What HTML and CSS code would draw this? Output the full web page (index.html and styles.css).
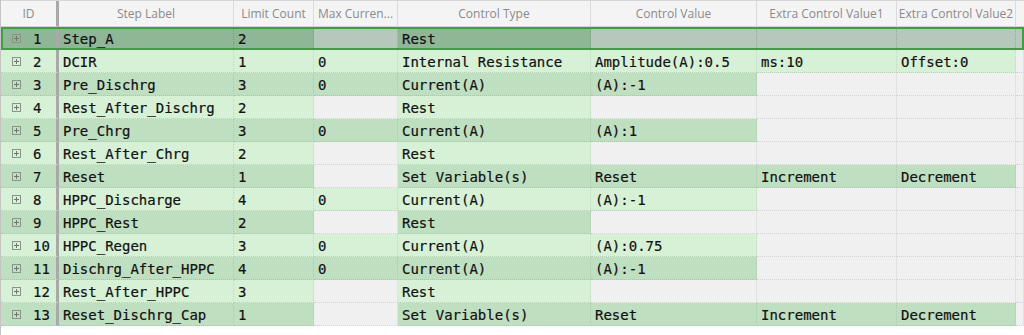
FILE: index.html
```html
<!DOCTYPE html>
<html>
<head>
<meta charset="utf-8">
<link rel="stylesheet" href="styles.css">
</head>
<body>
<div class="grid">
  <div class="row head">
    <div class="hc idcol">ID</div>
    <div class="hc">Step Label</div>
    <div class="hc">Limit Count</div>
    <div class="hc">Max Curren...</div>
    <div class="hc">Control Type</div>
    <div class="hc">Control Value</div>
    <div class="hc">Extra Control Value1</div>
    <div class="hc">Extra Control Value2</div>
    <div class="hc fill"></div>
  </div>

  <div class="row sel">
    <div class="c idcol"><svg class="exp" viewBox="0 0 9 9"><rect x="0.5" y="0.5" width="8" height="8"/><path d="M2 4.5h5M4.5 2v5"/></svg><span>1</span></div>
    <div class="c">Step_A</div>
    <div class="c">2</div>
    <div class="c e"></div>
    <div class="c">Rest</div>
    <div class="c e"></div>
    <div class="c e"></div>
    <div class="c e"></div>
    <div class="c e fill"></div>
  </div>

  <div class="row lt">
    <div class="c idcol"><svg class="exp" viewBox="0 0 9 9"><rect x="0.5" y="0.5" width="8" height="8"/><path d="M2 4.5h5M4.5 2v5"/></svg><span>2</span></div>
    <div class="c">DCIR</div>
    <div class="c">1</div>
    <div class="c">0</div>
    <div class="c">Internal Resistance</div>
    <div class="c">Amplitude(A):0.5</div>
    <div class="c">ms:10</div>
    <div class="c">Offset:0</div>
    <div class="c e fill"></div>
  </div>

  <div class="row dk">
    <div class="c idcol"><svg class="exp" viewBox="0 0 9 9"><rect x="0.5" y="0.5" width="8" height="8"/><path d="M2 4.5h5M4.5 2v5"/></svg><span>3</span></div>
    <div class="c">Pre_Dischrg</div>
    <div class="c">3</div>
    <div class="c">0</div>
    <div class="c">Current(A)</div>
    <div class="c">(A):-1</div>
    <div class="c e"></div>
    <div class="c e"></div>
    <div class="c e fill"></div>
  </div>

  <div class="row lt">
    <div class="c idcol"><svg class="exp" viewBox="0 0 9 9"><rect x="0.5" y="0.5" width="8" height="8"/><path d="M2 4.5h5M4.5 2v5"/></svg><span>4</span></div>
    <div class="c">Rest_After_Dischrg</div>
    <div class="c">2</div>
    <div class="c e"></div>
    <div class="c">Rest</div>
    <div class="c e"></div>
    <div class="c e"></div>
    <div class="c e"></div>
    <div class="c e fill"></div>
  </div>

  <div class="row dk">
    <div class="c idcol"><svg class="exp" viewBox="0 0 9 9"><rect x="0.5" y="0.5" width="8" height="8"/><path d="M2 4.5h5M4.5 2v5"/></svg><span>5</span></div>
    <div class="c">Pre_Chrg</div>
    <div class="c">3</div>
    <div class="c">0</div>
    <div class="c">Current(A)</div>
    <div class="c">(A):1</div>
    <div class="c e"></div>
    <div class="c e"></div>
    <div class="c e fill"></div>
  </div>

  <div class="row lt">
    <div class="c idcol"><svg class="exp" viewBox="0 0 9 9"><rect x="0.5" y="0.5" width="8" height="8"/><path d="M2 4.5h5M4.5 2v5"/></svg><span>6</span></div>
    <div class="c">Rest_After_Chrg</div>
    <div class="c">2</div>
    <div class="c e"></div>
    <div class="c">Rest</div>
    <div class="c e"></div>
    <div class="c e"></div>
    <div class="c e"></div>
    <div class="c e fill"></div>
  </div>

  <div class="row dk">
    <div class="c idcol"><svg class="exp" viewBox="0 0 9 9"><rect x="0.5" y="0.5" width="8" height="8"/><path d="M2 4.5h5M4.5 2v5"/></svg><span>7</span></div>
    <div class="c">Reset</div>
    <div class="c">1</div>
    <div class="c e"></div>
    <div class="c">Set Variable(s)</div>
    <div class="c">Reset</div>
    <div class="c">Increment</div>
    <div class="c">Decrement</div>
    <div class="c e fill"></div>
  </div>

  <div class="row lt">
    <div class="c idcol"><svg class="exp" viewBox="0 0 9 9"><rect x="0.5" y="0.5" width="8" height="8"/><path d="M2 4.5h5M4.5 2v5"/></svg><span>8</span></div>
    <div class="c">HPPC_Discharge</div>
    <div class="c">4</div>
    <div class="c">0</div>
    <div class="c">Current(A)</div>
    <div class="c">(A):-1</div>
    <div class="c e"></div>
    <div class="c e"></div>
    <div class="c e fill"></div>
  </div>

  <div class="row dk">
    <div class="c idcol"><svg class="exp" viewBox="0 0 9 9"><rect x="0.5" y="0.5" width="8" height="8"/><path d="M2 4.5h5M4.5 2v5"/></svg><span>9</span></div>
    <div class="c">HPPC_Rest</div>
    <div class="c">2</div>
    <div class="c e"></div>
    <div class="c">Rest</div>
    <div class="c e"></div>
    <div class="c e"></div>
    <div class="c e"></div>
    <div class="c e fill"></div>
  </div>

  <div class="row lt">
    <div class="c idcol"><svg class="exp" viewBox="0 0 9 9"><rect x="0.5" y="0.5" width="8" height="8"/><path d="M2 4.5h5M4.5 2v5"/></svg><span>10</span></div>
    <div class="c">HPPC_Regen</div>
    <div class="c">3</div>
    <div class="c">0</div>
    <div class="c">Current(A)</div>
    <div class="c">(A):0.75</div>
    <div class="c e"></div>
    <div class="c e"></div>
    <div class="c e fill"></div>
  </div>

  <div class="row dk">
    <div class="c idcol"><svg class="exp" viewBox="0 0 9 9"><rect x="0.5" y="0.5" width="8" height="8"/><path d="M2 4.5h5M4.5 2v5"/></svg><span>11</span></div>
    <div class="c">Dischrg_After_HPPC</div>
    <div class="c">4</div>
    <div class="c">0</div>
    <div class="c">Current(A)</div>
    <div class="c">(A):-1</div>
    <div class="c e"></div>
    <div class="c e"></div>
    <div class="c e fill"></div>
  </div>

  <div class="row lt">
    <div class="c idcol"><svg class="exp" viewBox="0 0 9 9"><rect x="0.5" y="0.5" width="8" height="8"/><path d="M2 4.5h5M4.5 2v5"/></svg><span>12</span></div>
    <div class="c">Rest_After_HPPC</div>
    <div class="c">3</div>
    <div class="c e"></div>
    <div class="c">Rest</div>
    <div class="c e"></div>
    <div class="c e"></div>
    <div class="c e"></div>
    <div class="c e fill"></div>
  </div>

  <div class="row dk">
    <div class="c idcol"><svg class="exp" viewBox="0 0 9 9"><rect x="0.5" y="0.5" width="8" height="8"/><path d="M2 4.5h5M4.5 2v5"/></svg><span>13</span></div>
    <div class="c">Reset_Dischrg_Cap</div>
    <div class="c">1</div>
    <div class="c e"></div>
    <div class="c">Set Variable(s)</div>
    <div class="c">Reset</div>
    <div class="c">Increment</div>
    <div class="c">Decrement</div>
    <div class="c e fill"></div>
  </div>
</div>
</body>
</html>
```

FILE: styles.css
```css
html, body {
  margin: 0;
  padding: 0;
  background: #ffffff;
}

.grid {
  width: 1024px;
  height: 335px;
  box-sizing: border-box;
  border-left: 1px solid #c4c4c4;
  background: #ffffff;
}

.row {
  display: grid;
  grid-template-columns: 58px 175px 80px 84px 193px 166px 140px 119px 8px;
  height: 23px;
  position: relative;
}

.head {
  height: 27px;
  background: #f4f4f4;
  border-top: 1px solid #d6d6d6;
  box-sizing: border-box;
}

.hc {
  font-family: "Open Sans", "Noto Sans", sans-serif;
  font-size: 12px;
  color: #8a8a8a;
  display: flex;
  align-items: center;
  justify-content: center;
  border-right: 1px solid #dadada;
  border-bottom: 1px solid #d2d2d2;
  white-space: nowrap;
  overflow: hidden;
}

.c {
  font-family: "DejaVu Sans Mono", "Liberation Mono", monospace;
  font-size: 14px;
  color: #111111;
  -webkit-text-stroke: 0.2px #111111;
  display: flex;
  align-items: center;
  padding-left: 4px;
  padding-top: 1px;
  white-space: nowrap;
  overflow: hidden;
  border-right: 1px dotted rgba(120, 140, 120, 0.25);
  border-bottom: 1px dotted rgba(120, 140, 120, 0.3);
}

.idcol {
  border-right: 3px solid #a9a9a9;
}

.c.idcol {
  padding-left: 11px;
  gap: 12px;
  border-right: 3px solid #a9a9a9;
}

.exp {
  width: 9px;
  height: 9px;
  flex: none;
}

.exp rect {
  fill: none;
  stroke: #8a948a;
  stroke-width: 1;
}

.exp path {
  stroke: #6e786e;
  stroke-width: 1;
}

.lt .c {
  background: #d6f1d6;
}

.dk .c {
  background: #bfdfc1;
}

.lt .c.e,
.dk .c.e {
  background: #f0f0f0;
  border-right: 1px solid #e2e2e2;
  border-bottom: 1px dotted #d4d4d4;
}

.sel {
  outline: 2px solid #3f9e44;
  outline-offset: -2px;
  z-index: 2;
}

.sel .c {
  background: #8fb697;
  border-right: 1px dotted rgba(90, 110, 95, 0.35);
}

.sel .c.e {
  background: #b6c8bc;
}

.sel .c.idcol {
  border-right: 3px solid #a9a9a9;
}

.fill {
  padding: 0;
}

.hc.fill {
  border-right: none;
}
```
